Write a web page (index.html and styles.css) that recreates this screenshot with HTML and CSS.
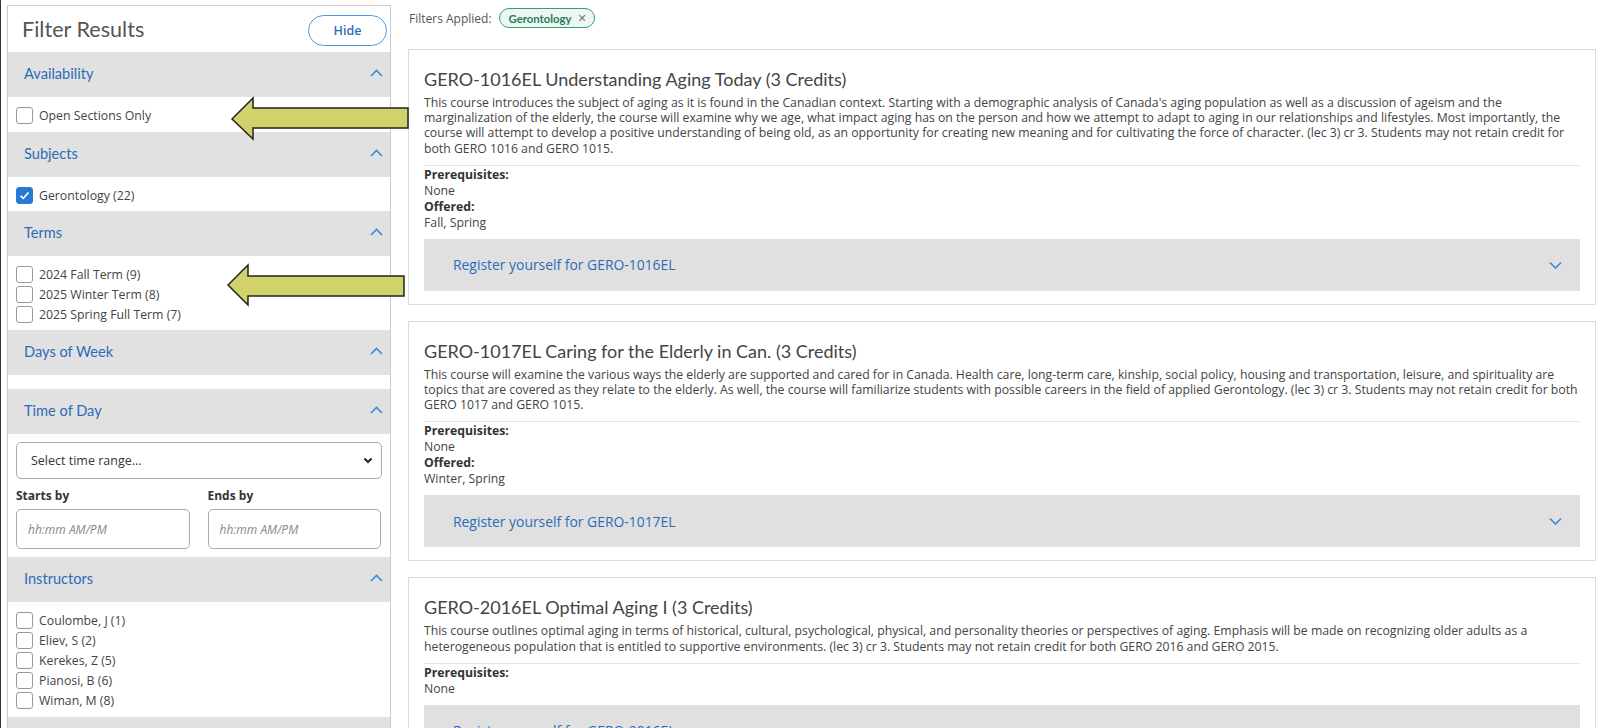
FILE: index.html
```html
<!DOCTYPE html>
<html>
<head>
<meta charset="utf-8" />
<title>Course Search</title>
<link rel="stylesheet" href="styles.css">
</head>
<body>
<div class="page">
  <aside class="filters">
    <div class="filters-top">
      <h2>Filter Results</h2>
      <button class="hide-btn">Hide</button>
    </div>

    <div class="group-head"><span>Availability</span><svg class="chev" width="13" height="8" viewBox="0 0 13 8"><path d="M1 7 L6.5 1.5 L12 7" /></svg></div>
    <div class="group-body">
      <label class="check"><span class="box"></span>Open Sections Only</label>
    </div>

    <div class="group-head"><span>Subjects</span><svg class="chev" width="13" height="8" viewBox="0 0 13 8"><path d="M1 7 L6.5 1.5 L12 7" /></svg></div>
    <div class="group-body tight">
      <label class="check"><span class="box checked"><svg width="11" height="9" viewBox="0 0 11 9"><path d="M1.5 4.8 L4.2 7.3 L9.5 1.5" /></svg></span>Gerontology (22)</label>
    </div>

    <div class="group-head"><span>Terms</span><svg class="chev" width="13" height="8" viewBox="0 0 13 8"><path d="M1 7 L6.5 1.5 L12 7" /></svg></div>
    <div class="group-body tight">
      <label class="check"><span class="box"></span>2024 Fall Term (9)</label>
      <label class="check"><span class="box"></span>2025 Winter Term (8)</label>
      <label class="check"><span class="box"></span>2025 Spring Full Term (7)</label>
    </div>

    <div class="group-head"><span>Days of Week</span><svg class="chev" width="13" height="8" viewBox="0 0 13 8"><path d="M1 7 L6.5 1.5 L12 7" /></svg></div>
    <div class="group-empty"></div>

    <div class="group-head"><span>Time of Day</span><svg class="chev" width="13" height="8" viewBox="0 0 13 8"><path d="M1 7 L6.5 1.5 L12 7" /></svg></div>
    <div class="time-body">
      <div class="select">
        <span>Select time range...</span>
        <svg width="10" height="7" viewBox="0 0 10 7"><path d="M1.5 1.5 L5 5 L8.5 1.5" /></svg>
      </div>
      <div class="time-grid">
        <div>
          <div class="field-label">Starts by</div>
          <input class="time-input" type="text" placeholder="hh:mm AM/PM">
        </div>
        <div>
          <div class="field-label">Ends by</div>
          <input class="time-input" type="text" placeholder="hh:mm AM/PM">
        </div>
      </div>
    </div>

    <div class="group-head"><span>Instructors</span><svg class="chev" width="13" height="8" viewBox="0 0 13 8"><path d="M1 7 L6.5 1.5 L12 7" /></svg></div>
    <div class="group-body">
      <label class="check"><span class="box"></span>Coulombe, J (1)</label>
      <label class="check"><span class="box"></span>Eliev, S (2)</label>
      <label class="check"><span class="box"></span>Kerekes, Z (5)</label>
      <label class="check"><span class="box"></span>Pianosi, B (6)</label>
      <label class="check"><span class="box"></span>Wiman, M (8)</label>
    </div>

    <div class="group-head"></div>
  </aside>

  <main class="results">
    <div class="applied">
      <span>Filters Applied:</span>
      <span class="chip">Gerontology <span class="chip-x">&#x2715;</span></span>
    </div>

    <article class="course">
      <h3>GERO-1016EL Understanding Aging Today (3 Credits)</h3>
      <p class="desc">This course introduces the subject of aging as it is found in the Canadian context. Starting with a demographic analysis of Canada's aging population as well as a discussion of ageism and the marginalization of the elderly, the course will examine why we age, what impact aging has on the person and how we attempt to adapt to aging in our relationships and lifestyles. Most importantly, the course will attempt to develop a positive understanding of being old, as an opportunity for creating new meaning and for cultivating the force of character. (lec 3) cr 3. Students may not retain credit for both GERO 1016 and GERO 1015.</p>
      <dl class="meta">
        <dt>Prerequisites:</dt>
        <dd>None</dd>
        <dt>Offered:</dt>
        <dd>Fall, Spring</dd>
      </dl>
      <div class="register">
        <span>Register yourself for GERO-1016EL</span>
        <svg class="chev" width="13" height="8" viewBox="0 0 13 8"><path d="M1 1.5 L6.5 7 L12 1.5" /></svg>
      </div>
    </article>

    <article class="course">
      <h3>GERO-1017EL Caring for the Elderly in Can. (3 Credits)</h3>
      <p class="desc">This course will examine the various ways the elderly are supported and cared for in Canada. Health care, long-term care, kinship, social policy, housing and transportation, leisure, and spirituality are topics that are covered as they relate to the elderly. As well, the course will familiarize students with possible careers in the field of applied Gerontology. (lec 3) cr 3. Students may not retain credit for both GERO 1017 and GERO 1015.</p>
      <dl class="meta">
        <dt>Prerequisites:</dt>
        <dd>None</dd>
        <dt>Offered:</dt>
        <dd>Winter, Spring</dd>
      </dl>
      <div class="register">
        <span>Register yourself for GERO-1017EL</span>
        <svg class="chev" width="13" height="8" viewBox="0 0 13 8"><path d="M1 1.5 L6.5 7 L12 1.5" /></svg>
      </div>
    </article>

    <article class="course">
      <h3>GERO-2016EL Optimal Aging I (3 Credits)</h3>
      <p class="desc">This course outlines optimal aging in terms of historical, cultural, psychological, physical, and personality theories or perspectives of aging. Emphasis will be made on recognizing older adults as a heterogeneous population that is entitled to supportive environments. (lec 3) cr 3. Students may not retain credit for both GERO 2016 and GERO 2015.</p>
      <dl class="meta">
        <dt>Prerequisites:</dt>
        <dd>None</dd>
      </dl>
      <div class="register">
        <span>Register yourself for GERO-2016EL</span>
        <svg class="chev" width="13" height="8" viewBox="0 0 13 8"><path d="M1 1.5 L6.5 7 L12 1.5" /></svg>
      </div>
    </article>
  </main>
</div>

<svg class="arrows" width="420" height="320" viewBox="0 0 420 320">
  <polygon points="231,119 252,98 252,108 407,108 407,128 252,128 252,139" />
  <polygon points="227,285 247,265 247,276 403,276 403,296 247,296 247,305" />
</svg>
</body>
</html>
```

FILE: styles.css
```css
html {
  scrollbar-width: none;
}
html::-webkit-scrollbar {
  display: none;
}
body {
  margin: 0;
  position: relative;
  border-left: 1px solid #333;
  font-family: "Open Sans", "Liberation Sans", sans-serif;
  font-size: 12.25px;
  color: #444;
  background: #fff;
}
.page {
  display: flex;
  align-items: flex-start;
  padding: 0 4px 0 6px;
}

/* sidebar */
.filters {
  flex: none;
  width: 384px;
  box-sizing: border-box;
  margin-top: 5px;
  border: 1px solid #ccc;
}
.filters-top {
  display: flex;
  justify-content: space-between;
  align-items: center;
  padding: 9px 3px 6px 14px;
}
.filters-top h2 {
  margin: 0 0 4px;
  font: 400 21.6px "Lato", sans-serif;
  color: #555;
}
.hide-btn {
  width: 79px;
  height: 31px;
  border: 1px solid #4b9be0;
  border-radius: 16px;
  background: #fff;
  color: #2b6dbb;
  font: 600 12.5px "Open Sans", sans-serif;
  padding: 0;
}
.group-head {
  height: 45px;
  box-sizing: border-box;
  display: flex;
  justify-content: space-between;
  align-items: center;
  padding: 0 7px 3px 16px;
  background: #e1e1e1;
  color: #2b6cb8;
  font: 400 14.6px "Lato", sans-serif;
}
.chev path {
  fill: none;
  stroke: #3a8ad8;
  stroke-width: 1.6;
}
.group-body {
  padding: 8px 8px 7px;
}
.group-body.tight {
  padding-bottom: 6px;
}
.group-empty {
  height: 14px;
}
.check {
  display: flex;
  align-items: center;
  gap: 6px;
  height: 20px;
  font-size: 12.3px;
  color: #444;
}
.box {
  width: 17px;
  height: 17px;
  box-sizing: border-box;
  border: 1px solid #999;
  border-radius: 3px;
  background: #fff;
  display: flex;
  align-items: center;
  justify-content: center;
}
.box.checked {
  background: #2a78d6;
  border-color: #2a78d6;
}
.box svg path {
  fill: none;
  stroke: #fff;
  stroke-width: 1.6;
}
.time-body {
  padding: 8px 8px 8px;
}
.select {
  height: 37px;
  box-sizing: border-box;
  border: 1px solid #aaa;
  border-radius: 5px;
  display: flex;
  align-items: center;
  justify-content: space-between;
  padding: 0 8px 0 14px;
  font-size: 12.5px;
  color: #333;
}
.select path {
  fill: none;
  stroke: #222;
  stroke-width: 2;
}
.time-grid {
  display: grid;
  grid-template-columns: 1fr 1fr;
  gap: 18px;
  margin-top: 8px;
  padding-right: 1px;
}
.field-label {
  font-weight: 700;
  font-size: 12px;
  line-height: 18px;
  color: #333;
  margin-bottom: 4px;
}
.time-input {
  display: block;
  width: 100%;
  height: 40px;
  box-sizing: border-box;
  border: 1px solid #aaa;
  border-radius: 5px;
  padding: 0 11px;
  font: italic 12px "Open Sans", sans-serif;
}
.time-input::placeholder {
  color: #888;
}

/* results */
.results {
  flex: 1;
  margin-left: 17px;
}
.applied {
  height: 36px;
  display: flex;
  align-items: center;
  gap: 7px;
  margin-bottom: 13px;
  padding-left: 1px;
  color: #555;
  font-size: 12px;
}
.chip {
  display: inline-flex;
  align-items: center;
  gap: 6px;
  height: 20px;
  box-sizing: border-box;
  padding: 0 7px 0 9px;
  border: 1px solid #3d9c7a;
  border-radius: 10px;
  background: #edf7f2;
  color: #2c7a5a;
  font: 700 11.3px "Lato", sans-serif;
}
.chip-x {
  color: #777;
  font: 400 11px "DejaVu Sans", sans-serif;
}
.course {
  border: 1px solid #ddd;
  padding: 17px 15px 13px;
  margin-bottom: 16px;
}
.course h3 {
  margin: 0 0 4px;
  font: 400 18px/24px "Lato", sans-serif;
  color: #444;
}
.desc {
  margin: 0;
  line-height: 15.2px;
  padding-bottom: 9px;
  border-bottom: 1px solid #e3e3e3;
}
.meta {
  margin: 0;
  padding-top: 1px;
  line-height: 16px;
}
.meta dt {
  font-weight: 700;
  color: #333;
}
.meta dd {
  margin: 0;
}
.register {
  margin-top: 8px;
  height: 52px;
  display: flex;
  align-items: center;
  justify-content: space-between;
  padding: 0 18px 0 29px;
  background: #e0e0e0;
  color: #2b6cb8;
  font-size: 13.9px;
}

.arrows {
  position: absolute;
  top: 0;
  left: 0;
  pointer-events: none;
}
.arrows polygon {
  fill: #d2d26a;
  stroke: #222;
  stroke-width: 1.5;
  stroke-linejoin: miter;
}
```
